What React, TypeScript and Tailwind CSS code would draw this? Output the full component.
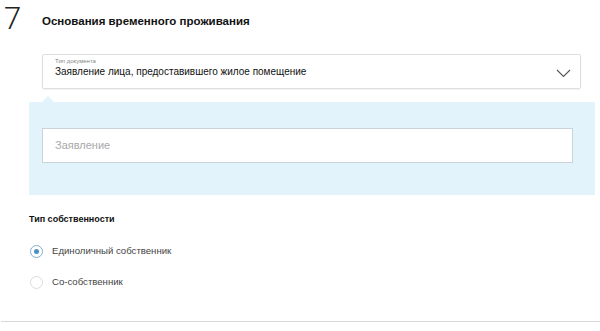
export default function App() {
  return (
    <div className="w-[600px] h-[331px] bg-white overflow-hidden font-['Liberation_Sans',Arial,sans-serif] text-[#222]">
      <div className="flex items-start h-[54px]">
        <span className="w-[42px] pl-[4px] pt-[3px] text-[31px] leading-[31px] font-light text-[#222] font-['Roboto',sans-serif]">
          7
        </span>
        <h2 className="mt-[13px] text-[11.5px] leading-[16px] font-bold text-[#111]">
          Основания временного проживания
        </h2>
      </div>

      <div className="ml-[42px] w-[539px] h-[35px] border border-[#dedede] rounded-[2px] shadow-[0_1px_2px_rgba(0,0,0,0.06)] flex items-start pl-[12px] pr-[9px] pt-[3px]">
        <div className="flex-1 flex flex-col">
          <span className="text-[6px] leading-[7px] text-[#888]">Тип документа</span>
          <span className="text-[10px] leading-[14px] text-[#111]">
            Заявление лица, предоставившего жилое помещение
          </span>
        </div>
        <svg width="15" height="9" viewBox="0 0 15 9" className="mt-[11px]" fill="none">
          <polyline points="1,1 7.5,7.5 14,1" stroke="#555" strokeWidth="1.1" />
        </svg>
      </div>

      <div className="relative mt-[13px] ml-[29px] w-[566px] h-[93px] bg-[#e3f3fc] pt-[26px] pl-[13px]">
        <div className="absolute left-[13px] top-[-6px] w-0 h-0 border-l-[6px] border-r-[6px] border-b-[6px] border-l-transparent border-r-transparent border-b-[#e3f3fc]" />
        <div className="w-[531px] h-[35px] bg-white border border-[#c9d3da] flex items-center pl-[12px]">
          <span className="text-[11px] text-[#a8a8a8]">Заявление</span>
        </div>
      </div>

      <div className="ml-[29px] mt-[18px] text-[9px] leading-[12px] font-bold text-[#111]">
        Тип собственности
      </div>

      <div className="ml-[30px] mt-[20px] flex flex-col gap-[18px]">
        <label className="flex items-center gap-[9px] h-[13px]">
          <span className="w-[13px] h-[13px] rounded-full border border-[#7fb0d0] flex items-center justify-center bg-white">
            <span className="w-[5px] h-[5px] rounded-full bg-[#4a90c0]" />
          </span>
          <span className="text-[9.6px] text-[#444]">Единоличный собственник</span>
        </label>
        <label className="flex items-center gap-[9px] h-[13px]">
          <span className="w-[13px] h-[13px] rounded-full border border-[#dcdcdc] bg-white" />
          <span className="text-[9.6px] text-[#444]">Со-собственник</span>
        </label>
      </div>

      <div className="mt-[32px] ml-[1px] w-[599px] border-t border-[#d9d9d9]" />
    </div>
  );
}
